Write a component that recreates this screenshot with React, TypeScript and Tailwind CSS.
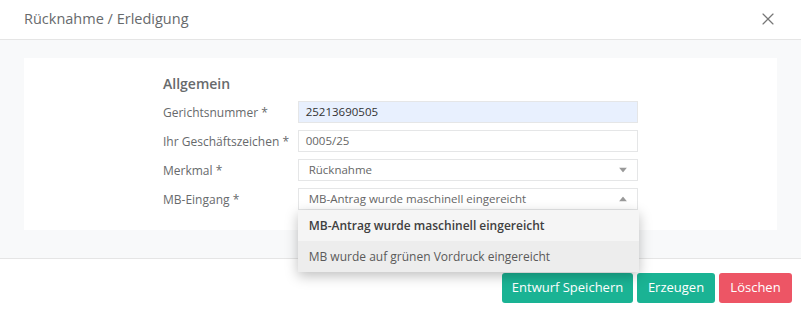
import { X } from 'lucide-react';

const rows = [
  { label: 'Gerichtsnummer *', value: '25213690505', kind: 'input', autofill: true },
  { label: 'Ihr Geschäftszeichen *', value: '0005/25', kind: 'input' },
  { label: 'Merkmal *', value: 'Rücknahme', kind: 'select' },
  { label: 'MB-Eingang *', value: 'MB-Antrag wurde maschinell eingereicht', kind: 'open' },
];

function Caret({ up }: { up?: boolean }) {
  return (
    <svg width="8" height="5" viewBox="0 0 8 5" className="absolute right-[10px] top-1/2 -translate-y-1/2">
      {up ? <path d="M0 5 L4 0 L8 5 Z" fill="#999" /> : <path d="M0 0 L8 0 L4 5 Z" fill="#999" />}
    </svg>
  );
}

export default function App() {
  return (
    <div
      className="w-[801px] h-[313px] bg-white overflow-hidden text-[#676a6c]"
      style={{ fontFamily: '"Open Sans", "Liberation Sans", sans-serif' }}
    >
      {/* Header */}
      <div className="h-[40px] border-b border-[#e5e5e5] flex items-center justify-between pl-[24px] pr-[23px]">
        <h3 className="text-[14.5px] leading-[20px] text-[#676a6c] -mt-[2px]">Rücknahme / Erledigung</h3>
        <X className="w-[20px] h-[20px] text-[#777] -mt-[2px]" strokeWidth={1.4} />
      </div>

      {/* Body */}
      <div className="h-[219px] bg-[#f8f9fa] border-b border-[#e5e5e5] px-[24px] pt-[18px]">
        <div className="bg-white h-[172px] pt-[16px]">
          <div className="w-[475px] mx-auto">
            <h4 className="text-[14px] leading-[20px] font-semibold text-[#676a6c] mb-[7px]">Allgemein</h4>
            <div className="flex flex-col gap-[7px]">
              {rows.map((r) => (
                <div key={r.label} className="flex items-center h-[22px]">
                  <label className="w-[135px] h-[22px] text-[12px] leading-[24px]">{r.label}</label>
                  <div
                    className={`relative w-[341px] h-[22px] border border-[#e5e6e7] flex items-center text-[11.5px] ${
                      r.kind === 'input' ? 'pl-[7px]' : 'pl-[10px]'
                    } ${r.autofill ? 'bg-[#e8f0fe] text-[#333]' : 'bg-white text-[#666]'}`}
                  >
                    {r.value}
                    {r.kind === 'select' && <Caret />}
                    {r.kind === 'open' && (
                      <>
                        <Caret up />
                        <div className="absolute left-[-1px] top-[21px] w-[341px] bg-white shadow-[0_4px_12px_rgba(0,0,0,0.25)] z-10">
                          <div className="h-[31px] flex items-center pl-[11px] bg-[#f5f5f5] text-[12px] font-semibold text-[#404040]">
                            MB-Antrag wurde maschinell eingereicht
                          </div>
                          <div className="h-[31px] flex items-center pl-[11px] bg-[#ededed] text-[12px] text-[#5a5a5a]">
                            MB wurde auf grünen Vordruck eingereicht
                          </div>
                        </div>
                      </>
                    )}
                  </div>
                </div>
              ))}
            </div>
          </div>
        </div>
      </div>

      {/* Footer */}
      <div className="flex justify-end gap-[4px] pr-[9px] pt-[14px]">
        <button className="h-[30px] w-[131px] rounded-[3px] bg-[#1ab394] text-white text-[13px]">Entwurf Speichern</button>
        <button className="h-[30px] w-[78px] rounded-[3px] bg-[#1ab394] text-white text-[13px]">Erzeugen</button>
        <button className="h-[30px] w-[73px] rounded-[3px] bg-[#ed5565] text-white text-[13px]">Löschen</button>
      </div>
    </div>
  );
}
